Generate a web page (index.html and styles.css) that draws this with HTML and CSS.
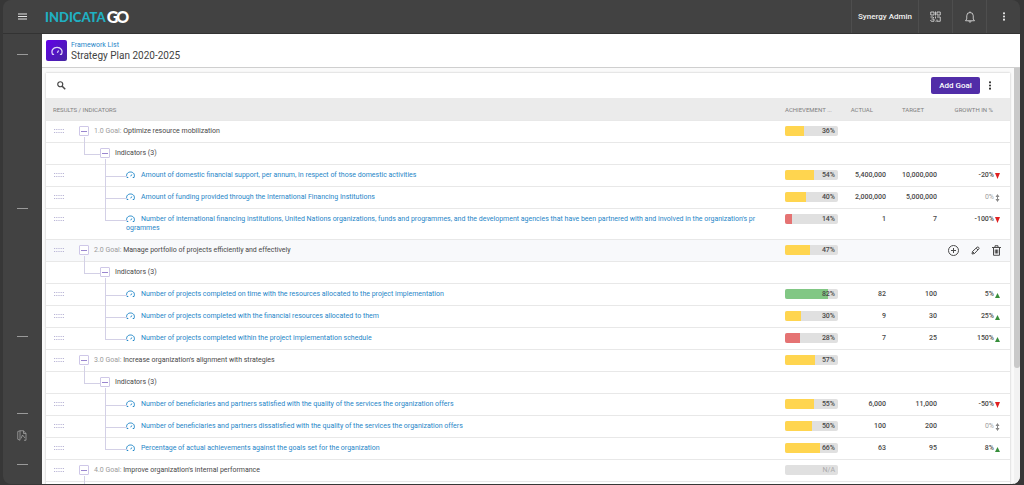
FILE: index.html
```html
<!DOCTYPE html>
<html lang="en">
<head>
<meta charset="utf-8">
<title>Strategy Plan 2020-2025</title>
<link rel="stylesheet" href="styles.css">
</head>
<body>
<svg class="sprite" aria-hidden="true">
  <symbol id="gauge" viewBox="0 0 18 14"><path d="M4.500 13H2C-.5 7 3 2 9 2S18.500 7 16 13H13.500M9.500 10.500L11.500 7" fill="none" stroke="currentColor" stroke-width="2" stroke-linejoin="round"/></symbol>
  <symbol id="drag" viewBox="0 0 10 4"><path d="M0 .5H10M0 3.500H10" fill="none" stroke="currentColor" stroke-width="1" stroke-dasharray="1.200 1"/></symbol>
  <symbol id="dots" viewBox="0 0 4 10"><circle cx="2" cy="1.500" r="1.200"/><circle cx="2" cy="5" r="1.200"/><circle cx="2" cy="8.500" r="1.200"/></symbol>
</svg>
<div class="app">
  <header class="topbar">
    <button class="menu" aria-label="Menu"><svg width="9" height="7" viewBox="0 0 9 7"><path d="M0 1H9M0 3.500H9M0 6H9" stroke="currentColor"/></svg></button>
    <a class="logo" href="#">INDICATA<span class="logo-go">G<span class="logo-o">O</span></span></a>
    <button class="user">Synergy Admin</button>
    <button class="tool" aria-label="Apps"><svg width="11" height="11" viewBox="0 0 22 22" fill="none" stroke="currentColor" stroke-width="1.600"><path d="M1.500 2H8V8H1.500zM14 2H20.500V8H14zM11 1V9M1 12H6L8 14M3 16H8V20.500H2.500L1 18M11 11V15M14 12H20.500V20.500H14V17M11 20.500H13"/></svg></button>
    <button class="tool" aria-label="Notifications"><svg width="10" height="12" viewBox="0 0 20 24" fill="none" stroke="currentColor" stroke-width="1.600"><path d="M1 19.500H19L16.500 16V9.500A6.500 6.500 0 0 0 3.500 9.500V16zM10 1V3M8 20.500A2 2 0 0 0 12 20.500"/></svg></button>
    <button class="tool" aria-label="More"><svg class="fill" width="4" height="9"><use href="#dots"/></svg></button>
  </header>
  <div class="body">
    <nav class="sidebar" aria-label="Main">
      <div class="group g1"></div>
      <div class="group g2"></div>
      <div class="group g3"></div>
      <div class="group g4"><a href="#" aria-label="Reports"><svg width="10" height="11" viewBox="0 0 20 22" fill="none" stroke="currentColor" stroke-width="1.500"><path d="M6 1.500H13L18 7V20.500H14M13 1.500V7H18M6 1.500L1.500 3V18.500L6 20.500zM8 17L11 10L16 16"/></svg></a></div>
      <div class="group g5"></div>
    </nav>
    <main class="content">
      <div class="pagehead">
        <span class="badge"><svg width="12" height="9"><use href="#gauge"/></svg></span>
        <div>
          <a class="crumb" href="#">Framework List</a>
          <h1>Strategy Plan 2020-2025</h1>
        </div>
      </div>
      <div class="scroller">
        <section class="card">
          <div class="toolbar">
            <button class="search" aria-label="Search"><svg width="9" height="9" viewBox="0 0 18 18" fill="none" stroke="currentColor" stroke-width="2.400"><circle cx="6.500" cy="6.500" r="5"/><path d="M10 10L16.500 16.500" stroke-width="3"/></svg></button>
            <button class="add">Add Goal</button>
            <button class="more" aria-label="More actions"><svg class="fill" width="4" height="9"><use href="#dots"/></svg></button>
          </div>
          <table>
            <colgroup><col><col class="c-ach"><col class="c-act"><col class="c-tar"><col class="c-gro"></colgroup>
            <thead><tr><th class="name">RESULTS / INDICATORS</th><th class="ach">ACHIEVEMENT ...</th><th>ACTUAL</th><th>TARGET</th><th class="gro">GROWTH IN %</th></tr></thead>
            <tbody id="rows"></tbody>
          </table>
        </section>
        <div class="scrollbar"><div class="thumb"></div></div>
      </div>
    </main>
  </div>
</div>
<script src="rows.js"></script>
</body>
</html>
```
FILE: rows.js
```javascript
const goals = [
  { no: '1.0', name: 'Optimize resource mobilization', pct: 36, items: [
    ['Amount of domestic financial support, per annum, in respect of those domestic activities', 54, '5,400,000', '10,000,000', -20],
    ['Amount of funding provided through the International Financing Institutions', 40, '2,000,000', '5,000,000', 0],
    ["Number of international financing institutions, United Nations organizations, funds and programmes, and the development agencies that have been partnered with and involved in the organization's pr<br>ogrammes", 14, '1', '7', -100]] },
  { no: '2.0', name: 'Manage portfolio of projects efficiently and effectively', pct: 47, active: true, items: [
    ['Number of projects completed on time with the resources allocated to the project implementation', 82, '82', '100', 5],
    ['Number of projects completed with the financial resources allocated to them', 30, '9', '30', 25],
    ['Number of projects completed within the project implementation schedule', 28, '7', '25', 150]] },
  { no: '3.0', name: "Increase organization's alignment with strategies", pct: 57, items: [
    ['Number of beneficiaries and partners satisfied with the quality of the services the organization offers', 55, '6,000', '11,000', -50],
    ['Number of beneficiaries and partners dissatisfied with the quality of the services the organization offers', 50, '100', '200', 0],
    ['Percentage of actual achievements against the goals set for the organization', 66, '63', '95', 8]] },
  { no: '4.0', name: "Improve organization's internal performance", pct: null, items: [] }
];

const drag = '<svg class="drag" width="10" height="4"><use href="#drag"/></svg>';
const toggle = '<button class="toggle" aria-label="Collapse"></button>';

function bar(pct) {
  if (pct === null) return '<div class="bar"><span class="value none">N/A</span></div>';
  const tone = pct > 80 ? 'good' : pct < 30 ? 'bad' : 'mid';
  return `<div class="bar"><div class="level ${tone}" style="width:${pct}%"></div><span class="value">${pct}%</span></div>`;
}

const arrows = {
  up: 'M2.500 2L5 7H0z',
  down: 'M0 1H5L2.500 7z',
  flat: 'M2.500 0L4.500 3H3V5H4.500L2.500 8L.5 5H2V3H.5z'
};

function growth(n) {
  const dir = n > 0 ? 'up' : n < 0 ? 'down' : 'flat';
  return `<span class="growth ${dir}">${n}%<svg width="5" height="8" viewBox="0 0 5 8"><path d="${arrows[dir]}"/></svg></span>`;
}

const actions = `<div class="actions">
  <button aria-label="Add"><svg width="11" height="11" viewBox="0 0 22 22"><circle cx="11" cy="11" r="10"/><path d="M11 6V16M6 11H16"/></svg></button>
  <button aria-label="Edit"><svg width="9" height="9" viewBox="0 0 18 18"><path d="M2 16L3 11L12 2.500Q14 1 15.500 3Q17 4.500 15.500 6L7 15zM10.500 4.500L14 8M3 11L7 15"/></svg></button>
  <button aria-label="Delete"><svg width="9" height="11" viewBox="0 0 18 22"><path d="M3 6V20.500H15V6M0 5H18M6 4V1.500H12V4M6.500 9V17M9 9V17M11.500 9V17"/></svg></button>
</div>`;

let html = '';
for (const g of goals) {
  html += `<tr class="${g.active ? 'active' : ''}"><td><div class="cell">${drag}${toggle}<span><span class="no">${g.no} Goal:</span> ${g.name}</span></div></td><td class="ach">${bar(g.pct)}</td>`;
  html += g.active ? `<td colspan="3">${actions}</td></tr>` : '<td></td><td></td><td></td></tr>';
  const count = g.items.length ? `<span>Indicators (${g.items.length})</span>` : '';
  html += `<tr class="sub"><td><div class="cell">${toggle}${count}</div></td><td></td><td></td><td></td><td></td></tr>`;
  for (const [name, pct, actual, target, change] of g.items) {
    html += `<tr class="leaf"><td><div class="cell">${drag}<a href="#"><svg class="gauge" width="9" height="7"><use href="#gauge"/></svg>${name}</a></div></td><td class="ach">${bar(pct)}</td><td class="num">${actual}</td><td class="num">${target}</td><td class="num gro">${growth(change)}</td></tr>`;
  }
}
document.getElementById('rows').innerHTML = html;
```
FILE: styles.css
```css
* { box-sizing: border-box; }
body { margin: 0; background: #373737; font: 7px/9px Roboto, sans-serif; color: #484848; overflow: hidden; }
button { border: 0; padding: 0; margin: 0; background: none; font: inherit; color: inherit; display: flex; align-items: center; justify-content: center; }
a { text-decoration: none; color: #1f86c8; }
svg { display: block; flex: none; }
.fill { fill: currentColor; }
.sprite { width: 0; height: 0; position: absolute; }

.app { height: calc(100vh - 1px); margin: 0 4px 1px 3px; display: flex; flex-direction: column; border-radius: 8px; overflow: hidden; background: #424242; }
.topbar { flex: none; height: 34px; display: flex; align-items: stretch; color: #e6e6e6; border-bottom: 1px solid #333; }
.menu { width: 39px; }
.logo { flex: 1; padding-left: 3px; display: flex; align-items: center; gap: 1px; font: 900 13px/16px Lato, sans-serif; color: #1fb0c2; }
.logo-go { color: #fff; font-size: 16px; }
.logo-o { margin-left: -2px; }
.user { width: 67px; font-size: 8px; font-weight: 500; color: #f0f0f0; border-left: 1px solid #4e4e4e; }
.tool { width: 34px; border-left: 1px solid #4e4e4e; }

.body { flex: 1; min-height: 0; display: flex; }
.sidebar { flex: none; width: 39px; padding: 20px 14px 0; color: #a8a8a8; }
.group { border-top: 1px solid #9a9a9a; width: 11px; }
.g1 { height: 154px; }
.g2 { height: 128px; }
.g3 { height: 77px; }
.g4 { height: 51px; padding-top: 16px; }
.g4 a { color: inherit; }

.content { flex: 1; min-width: 0; display: flex; flex-direction: column; background: #fafafa; }
.pagehead { flex: none; height: 34px; padding: 0 4px; display: flex; align-items: center; gap: 4px; background: #fff; border-bottom: 1px solid #cfcfcf; }
.badge { width: 21px; height: 21px; border-radius: 2px; display: grid; place-items: center; color: #ddd5f5; background: linear-gradient(135deg, #6200ea, #4527a0); }
.crumb { display: block; padding-top: 1px; }
h1 { margin: 0; font: 400 10px/12px Roboto, sans-serif; color: #424242; }

.scroller { flex: 1; min-height: 0; display: flex; overflow: hidden; }
.card { flex: 1; align-self: flex-start; margin: 5px 4px 0; background: #fff; box-shadow: 0 0 2px rgba(0, 0, 0, .25); }
.scrollbar { flex: none; width: 6px; background: #f2f2f2; }
.thumb { height: 72%; background: #c9c9c9; border-radius: 0 0 3px 3px; }
.toolbar { height: 25px; padding: 0 15px 0 10px; display: flex; align-items: center; }
.search { width: 10px; margin-right: auto; }
.add { width: 49px; height: 17px; border-radius: 2px; background: #512da8; color: #fff; font-size: 8px; font-weight: 500; }
.more { width: 20px; margin-right: -5px; color: #333; }

table { width: 100%; table-layout: fixed; border-spacing: 0; }
.c-ach { width: 62px; }
.c-act { width: 50px; }
.c-tar { width: 51px; }
.c-gro { width: 67px; }
th { height: 22px; padding: 0 19px 0 0; background: #ebebeb; color: #808080; font-size: 6px; font-weight: 400; text-align: right; white-space: nowrap; }
th.name { padding: 0 7px; text-align: left; }
th.ach { padding: 0 0 0 5px; text-align: left; }
th.gro { padding-right: 17px; }
td { height: 22px; padding: 0; border-top: 1px solid #e8e8e8; vertical-align: top; position: relative; }
td.ach { padding: 5px 4px 0 5px; }
td.num { padding: 6px 6px 0 0; text-align: right; font-weight: 500; }
td.gro { padding-right: 10px; }
.active td { background: #f8f9fb; }

.cell { display: flex; align-items: flex-start; padding: 5px 0 5px 8px; }
.cell > span, .cell > a { padding: 1px 0; }
.drag { margin-top: 3px; margin-right: 15px; color: #b9b5d6; }
.toggle { width: 10px; height: 10px; margin-right: 5px; border: 1px solid #cfc8e8; border-radius: 1px; background: #fff; flex: none; }
.toggle::before { content: ""; width: 6px; height: 1px; background: #9a86cf; }
.no { color: #9b9b9b; }
.sub .cell { padding-left: 54px; }
.leaf .drag { margin-right: 0; }
.leaf .cell a { margin-left: 62px; }
.gauge { display: inline-block; margin-right: 6px; vertical-align: -1px; }

/* Tree connectors run over the row borders */
.sub td:first-child::before { content: ""; position: absolute; left: 38px; top: -6px; width: 16px; height: 17px; border: solid #d3d0e6; border-width: 0 0 1px 1px; }
.leaf .cell::before { content: ""; position: absolute; left: 59px; top: -11px; width: 21px; height: 22px; border: solid #d3d0e6; border-width: 0 0 1px 1px; }
.sub + .leaf .cell::before { top: -6px; height: 17px; }

.bar { position: relative; height: 10px; border-radius: 2px; overflow: hidden; background: #e0e0e0; }
.level { height: 100%; }
.good { background: #81c784; }
.mid { background: #ffd54f; }
.bad { background: #e57373; }
.value { position: absolute; right: 3px; top: 1px; font-weight: 500; }
.none { color: #aaa; font-weight: 400; }
.growth { display: inline-flex; align-items: center; gap: 1px; }
.growth.up svg { fill: #388e3c; }
.growth.down svg { fill: #e02020; }
.growth.flat { color: #9e9e9e; font-weight: 400; }
.growth.flat svg { fill: #888; }

.actions { display: flex; justify-content: flex-end; align-items: center; gap: 12px; height: 21px; padding-right: 9px; color: #4a4a4a; }
.actions svg { fill: none; stroke: currentColor; stroke-width: 2; }
```
